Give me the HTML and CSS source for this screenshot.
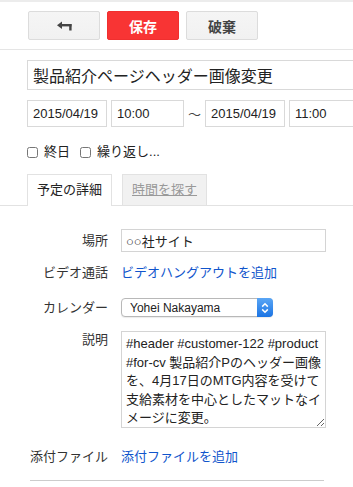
FILE: index.html
```html
<!DOCTYPE html>
<html lang="ja">
<head>
    <meta charset="UTF-8">
    <meta name="viewport" content="width=device-width, initial-scale=1.0">
    <title>予定の編集</title>
    <link rel="stylesheet" href="styles.css">
</head>
<body>
    <div class="toolbar">
        <button class="btn back" title="戻る">
            <svg width="15" height="10" viewBox="0 0 15 10">
                <path d="M0 4.2 L5 0.5 L5 8 Z" fill="#444"/>
                <rect x="4.5" y="3" width="10" height="2.4" fill="#444"/>
                <rect x="12.2" y="3" width="2.4" height="6.5" fill="#444"/>
            </svg>
        </button>
        <button class="btn save">保存</button>
        <button class="btn">破棄</button>
    </div>

    <div class="header-fields">
        <input class="title" type="text" value="製品紹介ページヘッダー画像変更">
        <div class="dates">
            <input class="field date" type="text" value="2015/04/19">
            <input class="field time" type="text" value="10:00">
            <span class="tilde">〜</span>
            <input class="field date" type="text" value="2015/04/19">
            <input class="field time" type="text" value="11:00">
        </div>
        <div class="options">
            <label class="check"><input type="checkbox">終日</label>
            <label class="check"><input type="checkbox">繰り返し...</label>
        </div>
    </div>

    <div class="tab-bar">
        <div class="tab active">予定の詳細</div>
        <div class="tab"><a href="#">時間を探す</a></div>
    </div>

    <div class="details">
        <div class="row row-where">
            <div class="label">場所</div>
            <input class="field wide" type="text" value="○○社サイト">
        </div>
        <div class="row row-video">
            <div class="label">ビデオ通話</div>
            <a class="link" href="#">ビデオハングアウトを追加</a>
        </div>
        <div class="row row-cal">
            <div class="label">カレンダー</div>
            <div class="select-wrap">
                <select class="calendar">
                    <option>Yohei Nakayama</option>
                </select>
                <span class="select-arrow">
                    <svg width="8" height="12" viewBox="0 0 8 12">
                        <path d="M1.2 4.6 L4 1.8 L6.8 4.6 M1.2 7.4 L4 10.2 L6.8 7.4" fill="none" stroke="#fff" stroke-width="1.5"/>
                    </svg>
                </span>
            </div>
        </div>
        <div class="row row-desc">
            <div class="label">説明</div>
            <textarea class="desc">#header #customer-122 #product
#for-cv 製品紹介Pのヘッダー画像
を、4月17日のMTG内容を受けて
支給素材を中心としたマットなイ
メージに変更。</textarea>
        </div>
        <div class="row row-attach">
            <div class="label">添付ファイル</div>
            <a class="link" href="#">添付ファイルを追加</a>
        </div>
        <div class="divider"></div>
    </div>
</body>
</html>
```

FILE: styles.css
```css
body {
    margin: 0;
    font-family: "Liberation Sans", "Noto Sans CJK JP", sans-serif;
    font-size: 13px;
    color: #222;
    background-color: #fff;
    overflow: hidden;
}
.toolbar {
    display: flex;
    gap: 7px;
    padding: 9px 0 9px 28px;
    border-top: 2px solid #ececec;
    border-bottom: 1px solid #e5e5e5;
}
.btn {
    width: 72px;
    height: 29px;
    margin: 0;
    padding: 0;
    border: 1px solid #dcdcdc;
    border-radius: 2px;
    background: linear-gradient(#f5f5f5, #f1f1f1);
    color: #444;
    font-family: "Liberation Sans", "Noto Sans CJK JP", sans-serif;
    font-size: 14px;
    font-weight: bold;
    display: flex;
    justify-content: center;
    align-items: center;
}
.btn.back svg {
    display: block;
}
.btn.save {
    background: #f83434;
    border-color: #f02f2f;
    color: #fff;
}
.header-fields {
    padding: 10px 0 0 27px;
}
input, select, textarea {
    font-family: "Liberation Sans", "Noto Sans CJK JP", sans-serif;
    color: #222;
    box-sizing: border-box;
    margin: 0;
    outline: none;
}
.title {
    display: block;
    width: 340px;
    height: 30px;
    padding: 0 5px;
    border: 1px solid #d9d9d9;
    font-size: 16px;
}
.dates {
    display: flex;
    align-items: center;
    margin-top: 10px;
    width: 340px;
}
.field {
    height: 27px;
    padding: 0 5px;
    border: 1px solid #d9d9d9;
    font-size: 13px;
}
.date {
    width: 80px;
}
.time {
    width: 73px;
    margin-left: 4px;
}
.dates .time:last-child {
    width: 70px;
}
.tilde {
    width: 21px;
    text-align: center;
    font-size: 13px;
    color: #444;
}
.options {
    display: flex;
    margin-top: 17px;
    height: 16px;
    align-items: center;
    gap: 10px;
}
.check {
    display: flex;
    align-items: center;
    gap: 6px;
    line-height: 16px;
    color: #222;
}
.check input {
    width: 11px;
    height: 11px;
    margin: 0;
}
.tab-bar {
    display: flex;
    align-items: flex-start;
    gap: 10px;
    margin-top: 14px;
    padding-left: 27px;
    height: 31px;
    border-bottom: 1px solid #e2e2e2;
}
.tab {
    height: 30px;
    padding: 0 9px;
    border: 1px solid #e2e2e2;
    border-bottom: none;
    line-height: 30px;
    background: #f1f1f1;
}
.tab.active {
    height: 31px;
    background: #fff;
    color: #222;
}
.tab a {
    color: #999;
}
.details {
    padding-top: 23px;
}
.row {
    display: flex;
    align-items: center;
    gap: 13px;
}
.label {
    width: 108px;
    text-align: right;
    color: #333;
    line-height: 18px;
}
.link {
    color: #15c;
    text-decoration: none;
    line-height: 20px;
}
.wide {
    width: 205px;
    height: 23px;
    padding: 0 4px;
    border-color: #d4d4d4;
}
.row-where {
    height: 23px;
}
.row-video {
    height: 20px;
    margin-top: 11px;
}
.row-cal {
    height: 19px;
    margin-top: 15px;
}
.select-wrap {
    position: relative;
    width: 152px;
    height: 19px;
}
.calendar {
    appearance: none;
    -webkit-appearance: none;
    width: 152px;
    height: 19px;
    padding: 0 0 0 8px;
    border: 1px solid #b8b8b8;
    border-radius: 4px;
    background: #fff;
    font-size: 12px;
    box-shadow: 0 1px 1px rgba(0, 0, 0, 0.08);
}
.select-arrow {
    position: absolute;
    top: 0;
    right: 0;
    width: 16px;
    height: 19px;
    border-radius: 0 4px 4px 0;
    background: linear-gradient(#5aa6f5, #1b74e4);
    display: flex;
    justify-content: center;
    align-items: center;
}
.row-desc {
    align-items: flex-start;
    margin-top: 14px;
}
.desc {
    width: 205px;
    height: 97px;
    padding: 3px 4px;
    border: 1px solid #d4d4d4;
    font-size: 13px;
    line-height: 18.5px;
    white-space: pre;
    overflow: hidden;
}
.row-attach {
    height: 20px;
    margin-top: 19px;
}
.divider {
    width: 294px;
    margin: 13px 0 0 30px;
    border-top: 1px solid #ccc;
}
```
